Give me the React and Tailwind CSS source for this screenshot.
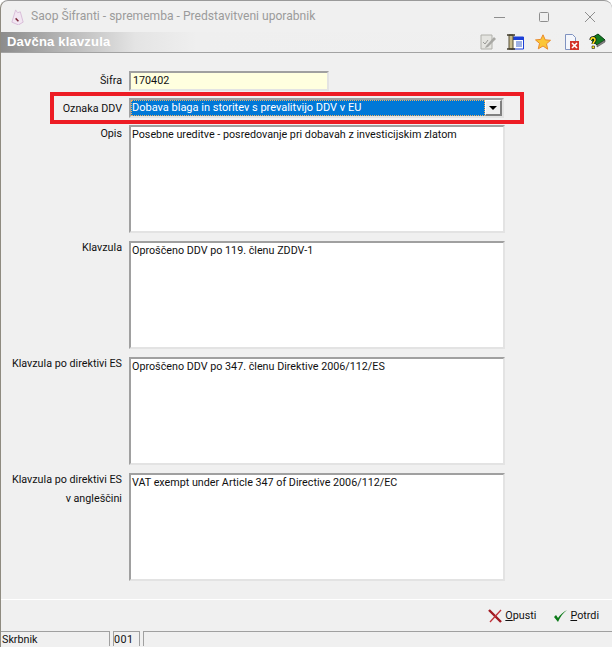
const font = { fontFamily: 'Roboto, "Liberation Sans", sans-serif' };

function Area({ label, text, second, pt }) {
  return (
    <div className="flex h-[108px] gap-[7px]">
      <div className={"w-[122px] shrink-0 whitespace-nowrap text-right " + pt}>
        <div className="leading-[14px]">{label}</div>
        {second && <div className="mt-[5px] leading-[14px]">{second}</div>}
      </div>
      <div className="w-[376px] border-2 border-[#a0a0a0] border-r-[#e3e3e3] border-b-[#e3e3e3] bg-white pl-[1px] pt-[1px] leading-[14px]">
        {text}
      </div>
    </div>
  );
}

function Icons() {
  return (
    <div className="flex items-center pb-[1px] pr-[6px]">
      <svg width="17" height="16" viewBox="0 0 17 16" className="mr-[10px]">
        <path d="M1 1h11v14H1z" fill="#e4e4e0" stroke="#b0b0aa" />
        <path d="M3 8l2 2 3-4" fill="none" stroke="#9a9a96" />
        <path d="M6 12l8-9 2 2-8 8-3 1z" fill="#a8a8a4" />
      </svg>
      <svg width="17" height="16" viewBox="0 0 17 16" className="mr-[11px]">
        <path d="M4 3h12.5v12H4z" fill="#fff" stroke="#1b3fd8" />
        <path d="M4 3h12.5v3H4z" fill="#1b3fd8" />
        <path d="M9 8h6M9 10h6M9 12h6" stroke="#3a63c8" />
        <path d="M2 1h4v14H2z" fill="#c8bb8c" stroke="#56503a" />
        <path d="M0 1h8M0 15h8" stroke="#3f3a2a" strokeWidth="1.5" />
      </svg>
      <svg width="16" height="16" viewBox="0 0 16 16" className="mr-[14px]">
        <path d="M8 .8l2.2 5 5.3.5-4 3.5 1.2 5.4L8 12l-4.7 2.8 1.2-5.4-4-3.5 5.3-.5z" fill="#fbc637" stroke="#e98a2c" />
      </svg>
      <svg width="14" height="16" viewBox="0 0 14 16" className="mr-[10px]">
        <path d="M.5 .5h7l3 3v12H.5z" fill="#f4f6fb" stroke="#7f92c0" />
        <path d="M5 7h9v9H5z" fill="#d3322a" />
        <path d="M7 9l5 5M12 9l-5 5" stroke="#fff" strokeWidth="1.6" />
      </svg>
      <svg width="17" height="17" viewBox="0 0 17 17">
        <path d="M1 6l8-5 7 6-8 5z" fill="#127a22" stroke="#053d0e" />
        <path d="M8 12l8-5v2l-8 5z" fill="#8a8a8a" stroke="#333" strokeWidth=".5" />
        <path d="M2 7c0-3 4-3 4 0 0 2-2 2-2 4" fill="none" stroke="#111" strokeWidth="3" />
        <path d="M2 7c0-3 4-3 4 0 0 2-2 2-2 4" fill="none" stroke="#ffe81a" strokeWidth="1.5" />
        <path d="M3 13h2.5v2.5H3z" fill="#ffe81a" stroke="#111" strokeWidth=".6" />
      </svg>
    </div>
  );
}

export default function App() {
  return (
    <div
      style={font}
      className="relative flex h-[647px] w-[612px] flex-col overflow-hidden rounded-t-[8px] border-l border-t border-[#9a9a9a] border-l-[#8f8b80] bg-[#f0f0f0] text-[10.75px] text-[#111]"
    >
      <div className="flex h-[31px] shrink-0 items-center">
        <svg className="ml-[9px]" width="15" height="17" viewBox="0 0 16 18">
          <path d="M2 15L6 2l2 3 3-1 3 11-5 3z" fill="#f2e6f2" stroke="#d8bcd8" />
          <path d="M6 11l3 3" stroke="#7a2b3a" strokeWidth="1.6" />
        </svg>
        <span className="ml-[6px] text-[12.1px] text-[#9b9b9b]">Saop Šifranti - sprememba - Predstavitveni uporabnik</span>
        <div className="ml-auto flex items-center">
          <svg width="11" height="10" viewBox="0 0 11 10" className="mr-[34px]"><path d="M0 5.5h11" stroke="#8e8e8e" /></svg>
          <svg width="10" height="10" viewBox="0 0 10 10" className="mr-[36px]"><rect x=".5" y=".5" width="9" height="9" rx="1" fill="none" stroke="#8e8e8e" /></svg>
          <svg width="10" height="10" viewBox="0 0 10 10" className="mr-[17px]"><path d="M0 0l10 10M10 0L0 10" stroke="#8e8e8e" /></svg>
        </div>
      </div>

      <div className="flex h-[21px] shrink-0 items-center justify-between border-b border-[#a3a3a3] bg-[linear-gradient(90deg,#8c8c8c_0%,#b5b5b5_10%,#e4e4e4_22%,#efefef_32%,#f0f0f0_100%)]">
        <span className="pl-[6px] text-[13px] font-bold tracking-[0.2px] text-white" style={{ fontFamily: '"Liberation Sans", sans-serif' }}>Davčna klavzula</span>
        <Icons />
      </div>

      <div className="flex flex-col pt-[18px]">
        <div className="flex h-[20px] gap-[7px]">
          <div className="w-[121px] text-right leading-[20px]">Šifra</div>
          <div className="w-[200px] border-2 border-[#a0a0a0] border-r-[#e3e3e3] border-b-[#e3e3e3] bg-[#ffffdf] pl-[2px] leading-[16px]">170402</div>
        </div>
        <div className="mt-[7px] flex h-[20px] gap-[7px]">
          <div className="w-[121px] text-right leading-[22px]">Oznaka DDV</div>
          <div className="flex w-[375px] border-2 border-[#a0a0a0] border-r-[#e3e3e3] border-b-[#e3e3e3] bg-white">
            <div className="flex-1 border border-dotted border-[#f0b060] bg-[#0078d7] text-[11px] leading-[14px] text-white">Dobava blaga in storitev s prevalitvijo DDV v EU</div>
            <div className="flex w-[17px] items-center justify-center border-t border-l border-white border-r-2 border-b-2 border-r-[#808080] border-b-[#808080] bg-[#f0f0f0]">
              <svg width="8" height="4" viewBox="0 0 8 4"><path d="M0 0h8L4 4z" fill="#000" /></svg>
            </div>
          </div>
        </div>
        <div className="mt-[7px] flex flex-col gap-[8px] -ml-px">
          <Area label="Opis" pt="pt-[2px]" text="Posebne ureditve - posredovanje pri dobavah z investicijskim zlatom" />
          <Area label="Klavzula" pt="pt-0" text="Oproščeno DDV po 119. členu ZDDV-1" />
          <Area label="Klavzula po direktivi ES" pt="pt-0" text="Oproščeno DDV po 347. členu Direktive 2006/112/ES" />
          <Area label="Klavzula po direktivi ES" pt="pt-0" second="v angleščini" text="VAT exempt under Article 347 of Directive 2006/112/EC" />
        </div>
      </div>

      <div className="mt-[18px] flex h-[32px] items-center justify-end border-t border-white pr-[13px] pt-[1px]">
        <svg width="15" height="14" viewBox="0 0 15 14" className="mr-[2px]"><path d="M1 1l12 12" stroke="#a11a22" strokeWidth="2.4" /><path d="M13 1L2 13" stroke="#c0323a" strokeWidth="1.3" /></svg>
        <span className="mr-[17px]"><span className="underline">O</span>pusti</span>
        <svg width="15" height="14" viewBox="0 0 15 14" className="mr-[2px]"><path d="M1 8l4 5C7 8 10 4 14 1 10 3 7 6 5 9L3 6z" fill="#0c7a18" /></svg>
        <span><span className="underline">P</span>otrdi</span>
      </div>

      <div className="flex h-[15px] gap-[3px] leading-[16px]">
        <div className="w-[109px] border-t border-r border-[#a0a0a0] pl-px">Skrbnik</div>
        <div className="w-[27px] border-t border-x border-[#a0a0a0] tracking-[0.4px]">001</div>
        <div className="flex-1 border-t border-l border-[#a0a0a0]" />
      </div>

      <div className="absolute left-[49px] top-[91px] h-[32px] w-[474px] border-[4px] border-[#ed1c24]" />
    </div>
  );
}
